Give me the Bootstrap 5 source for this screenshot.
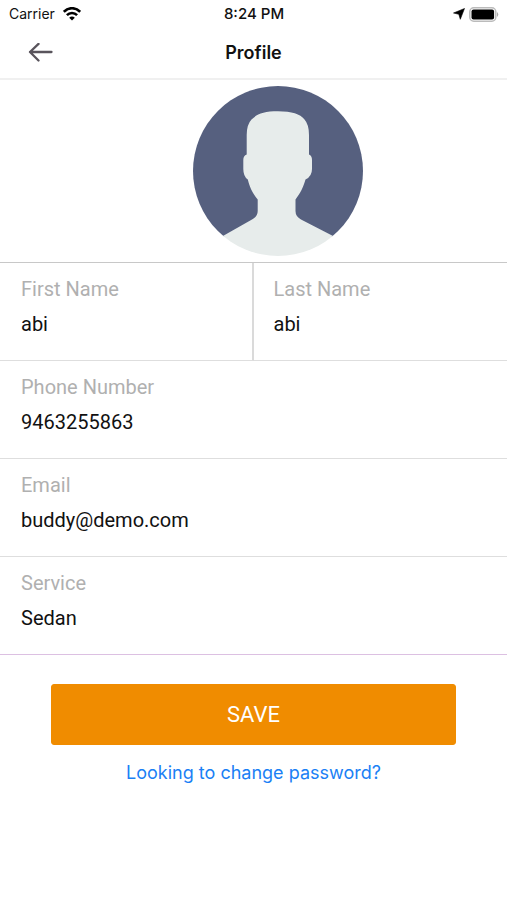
<!DOCTYPE html>
<html lang="en">
<head>
<meta charset="utf-8">
<meta name="viewport" content="width=device-width, initial-scale=1">
<title>Profile</title>
<link href="https://cdn.jsdelivr.net/npm/bootstrap@5.3.0/dist/css/bootstrap.min.css" rel="stylesheet">
<style>
body { font-family: Inter, "Liberation Sans", sans-serif; color: #111; background: #fff; }
.bar-cell { flex: 1 1 0; }
.status-bar { height: 28px; font-size: 14px; line-height: 28px; padding: 0 8px 0 9px; }
.clock { font-size: 15px; font-weight: 500; }
.title-bar { height: 52px; padding: 0 24px; border-bottom: 2px solid #f0f0f0; }
.title-bar h1 { font-size: 18px; font-weight: 600; line-height: 24px; color: #111; }
.back-btn { line-height: 0; }
.photo { padding-top: 6px; padding-bottom: 6px; border-bottom: 1px solid #c8c8c8; }
.field { padding: 14px 21px 24px; border-bottom: 1px solid #dedede; font-family: Roboto, "Liberation Sans", sans-serif; font-size: 20px; line-height: 24px; }
.field label { color: #b0b0b0; }
.field input { height: 24px; margin-top: 11px; color: #111; line-height: 24px; outline-offset: 4px; }
.field-split { border-right: 2px solid #dadada; }
.field-split + .field { padding-left: 20px; }
.field-last { border-bottom-color: #dcc0e2; }
.actions { padding: 29px 51px 0; }
.save-btn { height: 61px; --bs-btn-bg: #f08c00; --bs-btn-color: #fff; --bs-btn-border-color: #f08c00; --bs-btn-hover-bg: #d97e00; --bs-btn-hover-color: #fff; --bs-btn-border-radius: 3px; font-family: Roboto, "Liberation Sans", sans-serif; font-size: 22px; }
.password-link { margin-top: 16px; font-size: 18px; line-height: 24px; color: #1a80f5; }
</style>
<script src="https://cdn.jsdelivr.net/npm/bootstrap@5.3.0/dist/js/bootstrap.bundle.min.js" defer></script>
</head>
<body>
<header>
  <div class="status-bar d-flex align-items-center">
    <div class="bar-cell d-flex align-items-center gap-2">
      <span>Carrier</span>
      <svg width="18" height="14" viewBox="0 0 18 14" role="img" aria-label="Wi-Fi"><g fill="none" stroke="#000" stroke-width="2.600"><path d="M.8 4.800C5.500 0 12.500 0 17.200 4.800"/><path d="M3.900 8.100C6.800 5.200 11.200 5.200 14.100 8.100"/></g><path d="M9 13.500L6.200 10.700C7.800 9.200 10.200 9.200 11.800 10.700Z"/></svg>
    </div>
    <div class="clock">8:24 PM</div>
    <div class="bar-cell d-flex align-items-center justify-content-end gap-1">
      <svg width="12" height="12" viewBox="0 0 12 12" role="img" aria-label="Location"><path d="M11.500.5L7.300 11.300 5.800 6.300.5 5Z" stroke="#000" stroke-width=".6" stroke-linejoin="round"/></svg>
      <svg width="30" height="15" viewBox="0 0 30 15" role="img" aria-label="Battery"><rect x=".8" y=".8" width="26" height="13.400" rx="4" fill="#fff" stroke="#bbb" stroke-width="1.500"/><rect x="2.500" y="2.500" width="22.600" height="10" rx="2"/><path d="M28 5Q30.500 7.500 28 10Z" fill="#aaa"/></svg>
    </div>
  </div>
  <nav class="title-bar d-flex align-items-center" aria-label="Page">
    <div class="bar-cell d-flex">
      <button type="button" class="btn back-btn border-0 p-1" aria-label="Back">
        <svg width="25" height="20" viewBox="0 0 25 20" fill="none" stroke="#59545c" stroke-width="2.300" stroke-linecap="round" stroke-linejoin="round"><path d="M23.500 9H2M10.500.9L2 9L10.500 17.500"/></svg>
      </button>
    </div>
    <h1 class="m-0">Profile</h1>
    <div class="bar-cell"></div>
  </nav>
</header>
<main>
  <form>
    <div class="photo d-flex justify-content-center ps-5">
      <svg width="170" height="170" viewBox="0 0 170 170" role="img" aria-label="Profile photo">
        <defs><clipPath id="disc"><circle cx="85" cy="85" r="85"/></clipPath></defs>
        <g clip-path="url(#disc)">
          <rect width="170" height="150.500" fill="#56607f"/>
          <path fill="#e7eceb" d="M85 25.300C99 25.300 107 28 111.500 33.500Q116 38.500 116 49V68.500Q119 69.500 119 74V83Q119 90.500 112.500 93.500C110 102 107.500 107 102.500 113.500V125Q102.500 130.500 108 133.500L141 150.500V170H29V150.500L59 133.500Q64.700 130.500 64.700 125V113.500C59.500 107 57 102 54.800 93.500Q50.300 90.500 50.300 83V74Q50.300 69.500 53.700 68.500V49Q53.700 38.500 58.500 33.500C64 28 71 25.300 85 25.300Z"/>
        </g>
      </svg>
    </div>
    <div class="row g-0">
      <div class="col-6 field field-split">
        <label class="d-block" for="first">First Name</label>
        <input class="form-control-plaintext p-0" id="first" type="text" value="abi">
      </div>
      <div class="col-6 field">
        <label class="d-block" for="last">Last Name</label>
        <input class="form-control-plaintext p-0" id="last" type="text" value="abi">
      </div>
    </div>
    <div class="field">
      <label class="d-block" for="phone">Phone Number</label>
      <input class="form-control-plaintext p-0" id="phone" type="tel" value="9463255863">
    </div>
    <div class="field">
      <label class="d-block" for="email">Email</label>
      <input class="form-control-plaintext p-0" id="email" type="email" value="buddy@demo.com">
    </div>
    <div class="field field-last">
      <label class="d-block" for="service">Service</label>
      <input class="form-control-plaintext p-0" id="service" type="text" value="Sedan">
    </div>
    <div class="actions text-center">
      <button type="button" class="btn save-btn w-100">SAVE</button>
      <a class="password-link d-inline-block text-decoration-none" href="#">Looking to change password?</a>
    </div>
  </form>
</main>
</body>
</html>
